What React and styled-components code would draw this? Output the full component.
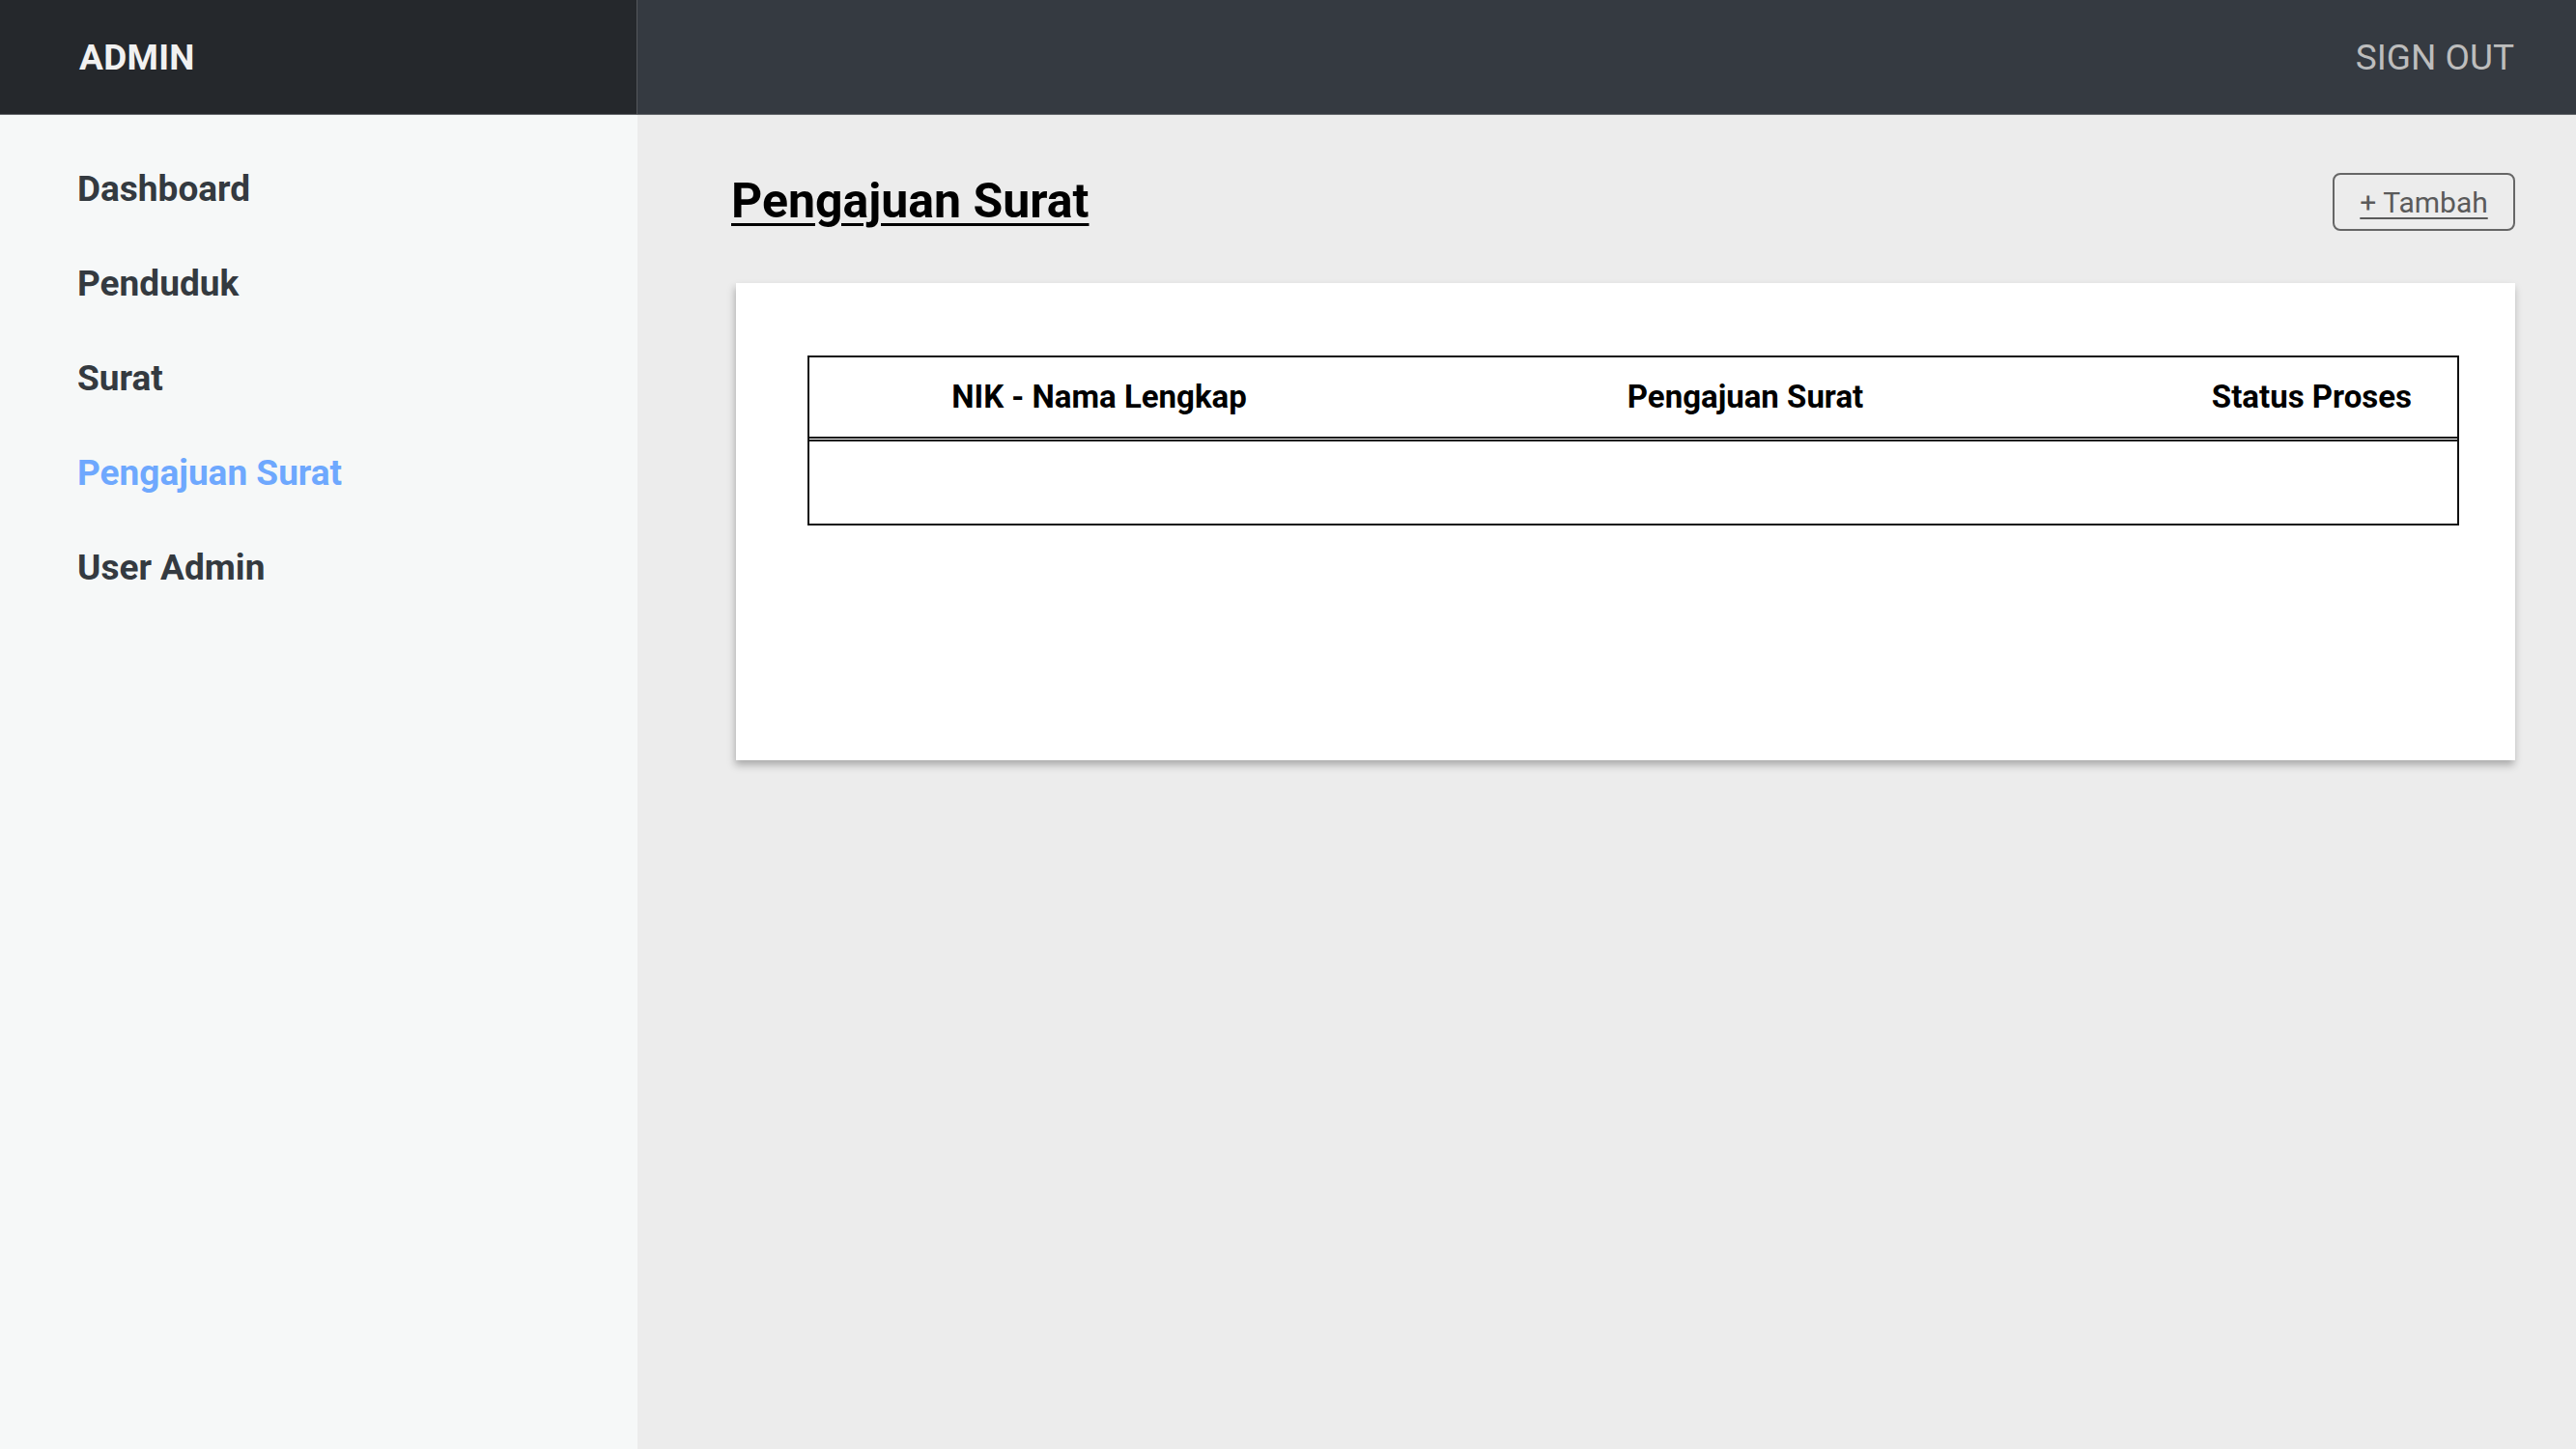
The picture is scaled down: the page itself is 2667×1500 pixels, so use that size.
import React from 'react';
import styled, { createGlobalStyle } from 'styled-components';

const GlobalStyle = createGlobalStyle`
    html, body {
        margin: 0;
        padding: 0;
    }
    body {
        font-family: Roboto, "Liberation Sans", Arial, sans-serif;
        background-color: #ececec;
    }
    * {
        box-sizing: border-box;
    }
`;

const menus = ['Dashboard', 'Penduduk', 'Surat', 'Pengajuan Surat', 'User Admin'];

export default function App() {
    return (
        <>
            <GlobalStyle />
            <Layout>
                <TopBar>
                    <Brand>ADMIN</Brand>
                    <NavBar>
                        <SignOut>SIGN OUT</SignOut>
                    </NavBar>
                </TopBar>
                <Body>
                    <SideBar>
                        {menus.map((menu) => (
                            <MenuItem key={menu} active={menu === 'Pengajuan Surat'}>
                                {menu}
                            </MenuItem>
                        ))}
                    </SideBar>
                    <Content>
                        <TitleRow>
                            <Title>Pengajuan Surat</Title>
                            <AddButton>+ Tambah</AddButton>
                        </TitleRow>
                        <Card>
                            <TableView>
                                <HeadRow>
                                    <HeadCell>NIK - Nama Lengkap</HeadCell>
                                    <HeadCell>Pengajuan Surat</HeadCell>
                                    <HeadCell right>Status Proses</HeadCell>
                                </HeadRow>
                                <EmptyRow />
                            </TableView>
                        </Card>
                    </Content>
                </Body>
            </Layout>
        </>
    );
}

const Layout = styled.div`
    display: flex;
    flex-direction: column;
    min-height: 100vh;
`;

const TopBar = styled.header`
    height: 119px;
    display: flex;
    border-bottom: 1px solid #65686c;
    background-color: #353a41;
`;

const Brand = styled.div`
    width: 660px;
    display: flex;
    align-items: center;
    padding-left: 82px;
    background-color: #25282c;
    border-right: 1px solid #55585c;
    color: #f1f1f1;
    font-size: 37px;
    font-weight: 700;
    letter-spacing: 0.3px;
`;

const NavBar = styled.nav`
    flex: 1;
    display: flex;
    align-items: center;
    justify-content: flex-end;
    padding-right: 64px;
`;

const SignOut = styled.span`
    color: #bdbdbd;
    font-size: 37px;
    font-weight: 400;
    cursor: pointer;
`;

const Body = styled.div`
    flex: 1;
    display: flex;
`;

const SideBar = styled.aside`
    width: 660px;
    display: flex;
    flex-direction: column;
    gap: 55px;
    padding: 55px 0 0 80px;
    background-color: #f6f8f8;
`;

const MenuItem = styled.a`
    font-size: 37px;
    font-weight: 700;
    line-height: 43px;
    color: ${(props) => (props.active ? '#6ea8fe' : '#343a40')};
    cursor: pointer;
`;

const Content = styled.main`
    flex: 1;
    display: flex;
    flex-direction: column;
    padding: 0 63px 0 97px;
    background-color: #ececec;
`;

const TitleRow = styled.div`
    display: flex;
    align-items: center;
    justify-content: space-between;
    height: 174px;
    padding-top: 3px;
`;

const Title = styled.h1`
    margin: 0;
    font-size: 50px;
    font-weight: 700;
    color: #000;
    text-decoration: underline;
    text-decoration-thickness: 3px;
    text-underline-offset: 6px;
`;

const AddButton = styled.button`
    width: 189px;
    height: 60px;
    margin-top: 3px;
    border: 2px solid #666;
    border-radius: 8px;
    background: transparent;
    color: #5a5a5a;
    font-family: Roboto, "Liberation Sans", Arial, sans-serif;
    font-size: 30px;
    text-decoration: underline;
    text-decoration-thickness: 2px;
    text-underline-offset: 5px;
    cursor: pointer;
`;

const Card = styled.div`
    margin-left: 5px;
    height: 494px;
    padding: 75px 58px 0 74px;
    background-color: #fff;
    box-shadow: -1px 5px 8px rgba(0, 0, 0, 0.28);
`;

const TableView = styled.div`
    border: 2px solid #111;
`;

const HeadRow = styled.div`
    display: grid;
    grid-template-columns: 600px 738px 1fr;
    height: 87px;
    align-items: center;
    border-bottom: 5px double #111;
`;

const HeadCell = styled.div`
    text-align: ${(props) => (props.right ? 'right' : 'center')};
    padding-right: ${(props) => (props.right ? '47px' : '0')};
    padding-bottom: 2px;
    font-size: 33px;
    font-weight: 700;
    color: #000;
`;

const EmptyRow = styled.div`
    height: 85px;
`;
